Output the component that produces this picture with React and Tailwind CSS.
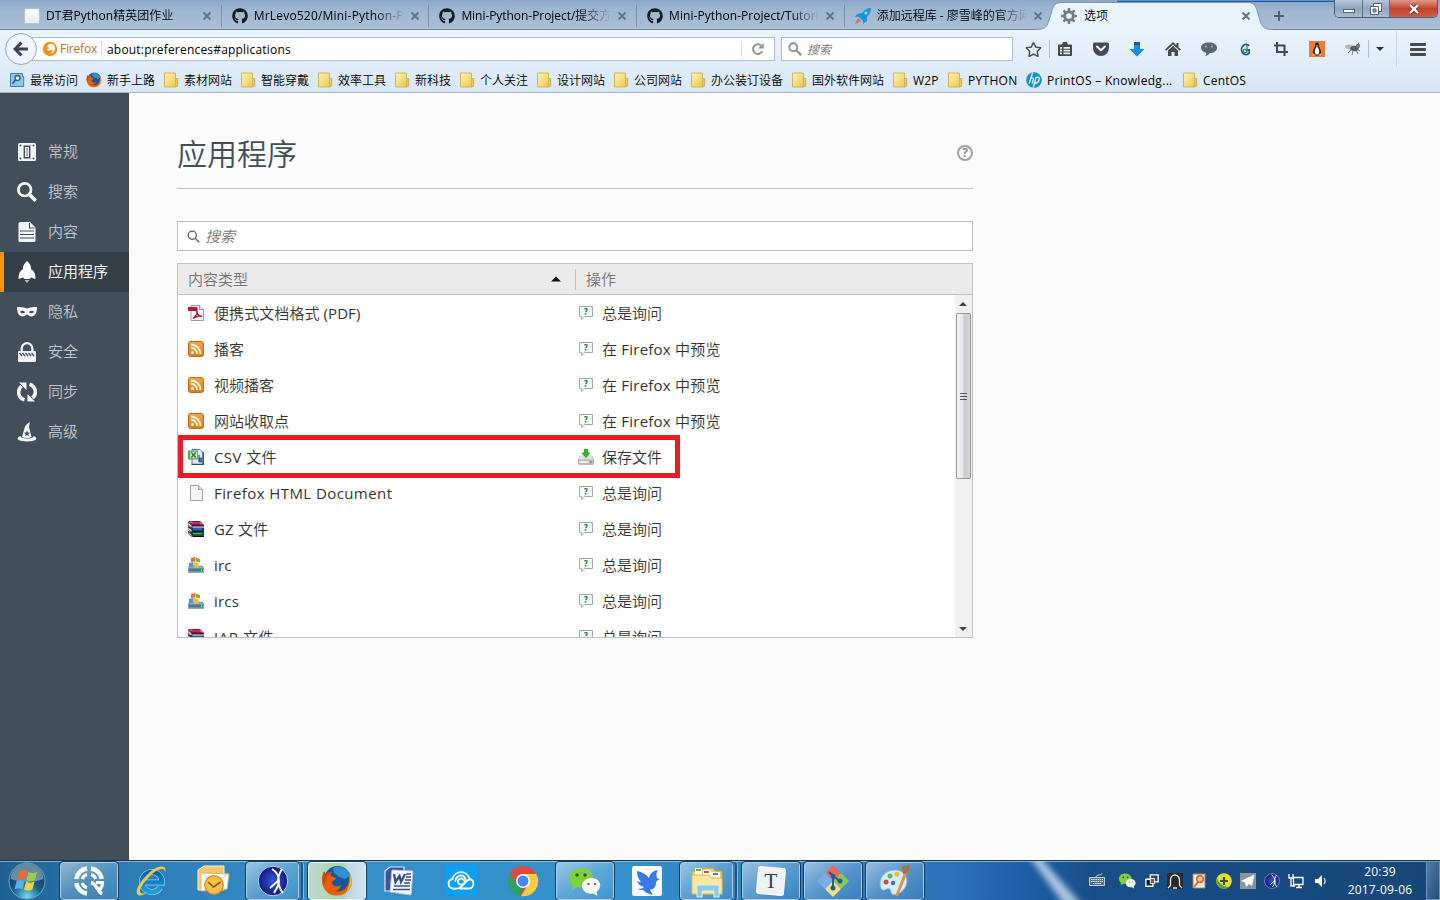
import React from 'react';
import { FaGithub, FaRegStar } from 'react-icons/fa';

const Svg = ({ s = 16, vb = '0 0 16 16', className = '', children }) => (
  <svg width={s} height={s} viewBox={vb} className={'shrink-0 ' + className}>{children}</svg>
);

/* ---------- browser icons ---------- */
const Page = () => (
  <Svg><path d="M1 1h14v14H1z" fill="#fbfbfb" stroke="#dfe3e8" strokeWidth=".6" /><path d="M2 8h12v6H2z" fill="#f0f0f0" /></Svg>
);
const RocketTab = () => (
  <Svg s={18} vb="0 0 18 18">
    <path d="M17 1c-4 0-7 2-9 5L3 7 1 10l4 0 4 4v3l4-3 0-4c3-3 4-6 4-9z" fill="#1b96dc" />
    <circle cx="12" cy="6" r="1.6" fill="#9fd4f2" />
    <path d="M4 11l-3 6 6-3z" fill="#e2574c" opacity=".8" />
  </Svg>
);
const Gear = () => (
  <Svg vb="0 0 16 16" s={16}>
    <path d="M8 0v16M0 8h16M2.400 2.400l11.200 11.200M13.600 2.400L2.400 13.600" stroke="#787c80" strokeWidth="2.500" />
    <circle cx="8" cy="8" r="4.300" fill="#e9f3fc" stroke="#787c80" strokeWidth="2.900" />
  </Svg>
);
const Close = () => (
  <Svg s={10} vb="0 0 10 10"><path d="M1.500 1.500l7 7M8.500 1.500l-7 7" stroke="#66758a" strokeWidth="2.100" /></Svg>
);
const Firefox = ({ s = 16 }) => (
  <Svg s={s} vb="0 0 32 32">
    <circle cx="16.500" cy="14.500" r="13.500" fill="#17559c" />
    <path d="M12 3c6-3 15 0 17 8l-5 3-6-2-5-4z" fill="#2d91cf" />
    <path d="M28 7c4 7 4 14-1 19-6 6-17 6-22 0C0 20 0 12 3 6l2 3c2-2 4-2 6-2-1 1-2 3-1 4l5 2c-1 3-4 2-4 5 1 4 6 4 9 2-1 4-3 5-6 6 8 2 14-4 14-12z" fill="#e66000" />
    <path d="M29 9c3 8 1 15-5 19 6-8 5-13 5-19z" fill="#ffcb2e" />
    <path d="M3 7c-2 5-2 10 0 14l3-9c2-3 4-4 5-5-3-1-5 1-6 2z" fill="#d2430f" />
  </Svg>
);
const FirefoxMono = () => (
  <Svg>
    <circle cx="8" cy="8" r="7.200" fill="#f18f1b" />
    <path d="M7 3c4-1 6 1 6 4 0 4-3 6-6 5 3 0 4-2 3-4-1 2-4 2-5 0l3-1-3-1c0-1 1-2 2-3z" fill="#fff" />
  </Svg>
);
const MostVisited = () => (
  <Svg><path d="M1.500 1.500h12v3h1.200v10H1.500z" fill="#8fc5e6" stroke="#3983b5" /><circle cx="8.500" cy="6" r="2.500" fill="#d8eef9" stroke="#25618c" strokeWidth="1.300" /><path d="M6.500 8l-3 3.500" stroke="#25618c" strokeWidth="1.800" /></Svg>
);
const Folder = () => (
  <Svg>
    <path d="M12 6.500h2.700V14l-2.200 1z" fill="#e9c95a" stroke="#c7a84b" strokeWidth=".9" />
    <path d="M1.500 1h11v14h-11z" fill="url(#folderG)" stroke="#d2b557" strokeWidth="1" />
    <defs><linearGradient id="folderG" x1="0" y1="0" x2="1" y2="1"><stop offset="0" stopColor="#fff4be" /><stop offset="1" stopColor="#eac648" /></linearGradient></defs>
  </Svg>
);
const Hp = () => (
  <Svg>
    <circle cx="8" cy="8" r="7.800" fill="#0b93d3" />
    <path d="M6.500 1L3.200 11.500M4.800 6.500c2-1.200 3 0 2.500 1.500L6 11.500M10.200 5L7.200 15.500M10 5.500c2.500-.8 3.800 0 3.100 2.500-.8 2.500-1.600 3.300-4 3" stroke="#fff" strokeWidth="1.200" fill="none" />
  </Svg>
);

const toolbarIcons = [
  <Svg key="list"><path d="M2 3.500h12a1 1 0 0 1 1 1V14a1 1 0 0 1-1 1H2a1 1 0 0 1-1-1V4.500a1 1 0 0 1 1-1z" fill="#474b4f" /><path d="M6 1h4l1 3H5z" fill="#474b4f" /><path d="M3 6h2v1.700H3zm3.500 0H13v1.700H6.500zM3 8.800h2v1.700H3zm3.500 0H13v1.700H6.500zM3 11.600h2v1.700H3zm3.500 0H13v1.700H6.500z" fill="#eaf3fb" /></Svg>,
  <Svg key="pocket"><path d="M1.500 1.500h13A1.500 1.500 0 0 1 16 3v4a8 8 0 0 1-16 0V3a1.500 1.500 0 0 1 1.500-1.500z" fill="#474b4f" /><path d="M4 5.500l4 3.800 4-3.800" stroke="#eaf3fb" strokeWidth="2" fill="none" strokeLinecap="round" strokeLinejoin="round" /></Svg>,
  <Svg key="down"><path d="M5 1h6v4H5z" fill="#3f5672" /><path d="M5 4h6v4h4.500L8 15.500.500 8H5z" fill="#168cf0" /></Svg>,
  <Svg key="home"><path d="M8 1L0 8.500l1.200 1.200L8 3.500l6.800 6.200L16 8.500l-2.500-2.300V2h-2v2.200z" fill="#474b4f" /><path d="M8 5L3 9.500V15h3.500v-4h3v4H13V9.500z" fill="#474b4f" /></Svg>,
  <Svg key="chat"><path d="M8 1.500c5 0 8 2 8 5.200s-3 5.300-7 5.300c-2 2.300-3.500 3-5 3 1-1 1.500-2 1-3.500C2 11 0 9 0 6.700 0 3.500 3 1.500 8 1.500z" fill="#596675" /><circle cx="5" cy="5.500" r="1" fill="#aeb9c4" /><circle cx="11" cy="5.500" r="1" fill="#aeb9c4" /></Svg>,
  <Svg key="g" s={13}><path d="M12.500 3.500A5.500 6.300 0 1 0 12.500 12.500V8.500H8" fill="none" stroke="#2a45b0" strokeWidth="2" /><path d="M9.800 2v10M9.500 9a2.200 2.200 0 1 0 0 1.500" fill="none" stroke="#2f8c55" strokeWidth="1.500" /></Svg>,
  <Svg key="crop"><path d="M4 1v10h11M1 4.500h10.500V15" fill="none" stroke="#474b4f" strokeWidth="2" /></Svg>,
  <Svg key="tux"><path d="M0 0h16v16H0z" fill="#ee7a35" /><path d="M8 1.500c-2 0-2 2-2 4-1 2-2.500 4-2 7l2 2h4l2-2c.500-3-1-5-2-7 0-2 0-4-2-4z" fill="#222" /><path d="M8 5.500c-2.500 2.500-3 6-1.300 8h2.600C11 11.500 10.500 8 8 5.500z" fill="#fff" /><path d="M6.500 4.500h3L8 6zM3.500 12l3 2-2 1zM12.500 12l-3 2 2 1z" fill="#f6c037" /></Svg>,
  <Svg key="fly"><ellipse cx="5" cy="6" rx="5" ry="2.400" fill="#b3b7bb" transform="rotate(12 4.500 6)" /><ellipse cx="9.500" cy="7.500" rx="4.200" ry="2.800" fill="#55595d" /><circle cx="13" cy="5" r="2.200" fill="#777" /><path d="M6 9l-3 3M8 10l-1 4M11 9l2 4M12 8l3 2M11 5l3-3" stroke="#686c70" strokeWidth=".9" /></Svg>,
];

const tabs = [
  { icon: <Page />, t: 'DT君Python精英团作业', sep: true, k: 'tracking-[0.050px]' },
  { icon: <FaGithub size={16} color="#15181c" />, t: 'MrLevo520/Mini-Python-P', sep: true, k: 'tracking-[0.200px]' },
  { icon: <FaGithub size={16} color="#15181c" />, t: 'Mini-Python-Project/提交方', sep: true, k: 'tracking-[-0.050px]' },
  { icon: <FaGithub size={16} color="#15181c" />, t: 'Mini-Python-Project/Tutori', sep: true, k: 'tracking-[0.050px]' },
  { icon: <RocketTab />, t: '添加远程库 - 廖雪峰的官方网', sep: false, k: '' },
];

const bookmarks = [
  [<MostVisited />, '最常访问', 'w-[77px]'], [<Firefox />, '新手上路', 'w-[77px]'],
  [<Folder />, '素材网站', 'w-[77px]'], [<Folder />, '智能穿戴', 'w-[77px]'],
  [<Folder />, '效率工具', 'w-[77px]'], [<Folder />, '新科技', 'w-[65px]'],
  [<Folder />, '个人关注', 'w-[77px]'], [<Folder />, '设计网站', 'w-[77px]'],
  [<Folder />, '公司网站', 'w-[77px]'], [<Folder />, '办公装订设备', 'w-[101px]'],
  [<Folder />, '国外软件网站', 'w-[101px]'], [<Folder />, 'W2P', 'w-[55px] tracking-[0.200px]'],
  [<Folder />, 'PYTHON', 'w-[79px] tracking-[0.300px]'], [<Hp />, 'PrintOS – Knowledg...', 'w-[156px] tracking-[0.300px]'],
  [<Folder />, 'CentOS', 'w-[80px] tracking-[0.200px]'],
];

/* ---------- preferences sidebar ---------- */
const W = '#f4f5f6';
const nav = [
  ['常规', <Svg key="a" s={20} vb="0 0 20 20"><rect x="1" y="1" width="18" height="18" rx="1.500" fill={W} /><path d="M7.300 4.200h5.400v11.600H7.300z" fill="none" stroke="#424f5a" strokeWidth="1.400" /><path d="M9.300 6h1.400v8H9.300z" fill="#424f5a" opacity=".55" /><g fill="#424f5a"><circle cx="3.500" cy="3.500" r="1" /><circle cx="16.500" cy="3.500" r="1" /><circle cx="3.500" cy="16.500" r="1" /><circle cx="16.500" cy="16.500" r="1" /></g></Svg>],
  ['搜索', <Svg key="b" s={20} vb="0 0 20 20"><circle cx="7.700" cy="7.700" r="6.300" fill="none" stroke={W} strokeWidth="2.700" /><path d="M12 12l6.800 6.800" stroke={W} strokeWidth="3.600" /></Svg>],
  ['内容', <Svg key="c" s={20} vb="0 0 20 20"><path d="M3 0h10l5.500 5.500V18.500a1.500 1.500 0 0 1-1.500 1.500H3a1.500 1.500 0 0 1-1.500-1.500v-17A1.500 1.500 0 0 1 3 0z" fill={W} /><path d="M12.500 1v5h5M3 9h14M3 12.500h14M3 16h14" stroke="#424f5a" strokeWidth="1.200" fill="none" /></Svg>],
  ['应用程序', <Svg key="d" s={22} vb="0 0 22 22"><path d="M11 0c3 2.500 4.200 5 4.200 8.500 2.800 1.500 4.300 4 4.300 9.500l-4.500-1.500-1.500 1.500h-5L7 16.500 2.500 18c0-5.500 1.500-8 4.300-9.500C6.800 5 8 2.500 11 0z" fill="#fff" /><path d="M8.500 19h5L11 22z" fill="#b5bcc1" /></Svg>],
  ['隐私', <Svg key="e" s={20} vb="0 0 20 20"><path d="M0 5c3 0 7 .2 10 1.500C13 5.200 17 5 20 5c0 6-2 9.500-5.500 9.500-2.500 0-3.500-2-4.500-2s-2 2-4.500 2C2 14.500 0 11 0 5z" fill={W} /><path d="M3 9.500c2-1.300 4-1 5.200.8C6.500 11.800 4 11.800 3 9.500zm14 0c-2-1.300-4-1-5.200.8 1.700 1.500 4.200 1.500 5.200-.8z" fill="#424f5a" /></Svg>],
  ['安全', <Svg key="f" s={20} vb="0 0 20 20"><path d="M4.700 9.500V6.500a5.300 5.300 0 0 1 10.600 0v3" fill="none" stroke={W} strokeWidth="2.300" /><rect x="1" y="9" width="18" height="11" rx="1.300" fill={W} /><path d="M2.500 11l2.500 3M5.500 11l2.500 3M8.500 11l2.500 3M11.500 11l2.500 3M14.500 11l2.500 3" stroke="#424f5a" strokeWidth="1.300" /></Svg>],
  ['同步', <Svg key="g" s={20} vb="0 0 20 20"><path d="M7.500 17.800A8 8 0 0 1 4.500 4M12.500 2.200A8 8 0 0 1 15.500 16" fill="none" stroke={W} strokeWidth="3.600" /><path d="M2 .500h7.500v7.500zM18 19.500h-7.500V12z" fill={W} /></Svg>],
  ['高级', <Svg key="h" s={20} vb="0 0 20 20"><path d="M13 0l-1 5 2.500 10c-3 1.500-7 1.500-9.500 0L7.500 6C8.500 3 10 1.500 13 0z" fill={W} /><path d="M10 8.500l.9 2 2.100.200-1.600 1.400.5 2.100-1.900-1.100-1.900 1.100.5-2.100L7 10.700l2.100-.2z" fill="#424f5a" /><path d="M3.500 14c-5 2-4 5.500 6.500 5.500s11.500-3.500 6.500-5.500c.5 3-13 3.500-13 0z" fill={W} /></Svg>],
];

/* ---------- file type icons ---------- */
const Pdf = () => <Svg><path d="M3 .500h8.500l4 4v11H3z" fill="#fff" stroke="#a8909a" /><path d="M11.500.500v4h4" fill="#eee" stroke="#a8909a" /><path d="M0 2h9.500v4H0z" fill="#ad1f2e" /><path d="M5 13.500c2-1 4.500-5 4-7-.3-1-.9 0 0 1.500 1 2 2.500 3.500 5 3.500-3-1.200-6 0-9 2z" fill="none" stroke="#ad1f2e" strokeWidth="1.400" /></Svg>;
const Rss = () => <Svg><rect x=".5" y=".5" width="15" height="15" rx="2" fill="url(#rssG)" stroke="#c56a16" /><defs><linearGradient id="rssG" x1="0" y1="0" x2="0" y2="1"><stop offset="0" stopColor="#f2a54e" /><stop offset="1" stopColor="#e07a14" /></linearGradient></defs><circle cx="4.500" cy="11.600" r="1.500" fill="#fff" /><path d="M3 6.800a6.200 6.200 0 0 1 6.200 6.200M3 3.500a9.500 9.500 0 0 1 9.500 9.500" fill="none" stroke="#fff3e2" strokeWidth="1.900" /></Svg>;
const Csv = () => <Svg><path d="M4 .500h8l3.500 3.500v11.500H4z" fill="#dfe9f7" stroke="#5577a5" /><path d="M15 3v12.500H3.500" fill="none" stroke="#274a80" strokeWidth="1.300" /><path d="M0 1.500h10v9H0z" fill="#54a455" /><path d="M2.200 2.800h7v6.500h-7z" fill="#d9efd4" /><path d="M3.300 3.500l4.500 5M7.800 3.500l-4.500 5" stroke="#287d38" strokeWidth="1.600" /><path d="M11 6v7M13.300 9h-1.300v4h1.300z" stroke="#254f90" strokeWidth="1.100" fill="none" /></Svg>;
const Html = () => <Svg><path d="M2.500.500h8l4 4v11h-12z" fill="#f6f6f6" stroke="#a4a4a4" /><path d="M10.500.500v4h4" fill="#ddd" stroke="#a4a4a4" /></Svg>;
const Rar = () => <Svg><path d="M0 0h12l4 4v1H4z" fill="#8d1246" /><path d="M2 1h10l2 2H4z" fill="#b8266a" /><path d="M3 4.500h13v1H4z" fill="#111" /><path d="M0 1l4 4v2L0 4z" fill="#eee" stroke="#111" strokeWidth=".6" /><path d="M0 5l4 1.500h12V10H4L0 7z" fill="#153b88" /><path d="M5 7.500h9v1H5z" fill="#4c90d6" /><path d="M0 10l4 1h12v4.500H5L0 12z" fill="#14522c" /><path d="M5 12h9v1.200H5z" fill="#46b56c" /><path d="M0 6l4 3v2L0 8.500zM0 10.500L4 14v1.500L0 12.500z" fill="#eee" stroke="#111" strokeWidth=".6" /><path d="M4 10h12v1H4zM4 15h12v1H5z" fill="#111" /><path d="M12 1.500l2 2M2.500 1.200h2" stroke="#efc43c" strokeWidth="1" /></Svg>;
const Win = () => <Svg><path d="M1.500 9h13L16 11v4.500H0V11z" fill="#9aaab3" stroke="#72828c" strokeWidth=".6" /><path d="M1 11.500h14v3H1z" fill="#47788c" /><path d="M13 12h1v2h-1z" fill="#7bee81" /><path d="M3 1l4-1v4.500l-4 .5z" fill="#e3703a" /><path d="M7.500.500L12 2v3.500L7.500 4.500z" fill="#7fb43f" /><path d="M1 6l4.500-1v5H1z" fill="#4a98da" /><path d="M6 5l4.500 1v4.500H6z" fill="#f1bd35" /></Svg>;
const Ask = () => <Svg><path d="M1.500 1.500h13v10H7L3.500 14.500v-3h-2z" fill="#f5f8f9" stroke="#a3a9ab" /><path d="M6.300 3.800h2.500v1.900L7.600 7M7.600 8v1.500" fill="none" stroke="#2f9c3a" strokeWidth="1.600" /></Svg>;
const Save = () => <Svg><path d="M2 7h12l2 4v3.500l-1 1H1l-1-1V11z" fill="#b8b8b8" stroke="#999" strokeWidth=".5" /><path d="M2 7h12l1.500 3.500H.5z" fill="#dedede" /><path d="M1.500 12h9v2h-9z" fill="#eee" /><path d="M12 12.500h2v1h-2z" fill="#666" /><path d="M6.300 0h3.400v4H12L8 8.500 4 4h2.300z" fill="#37b52d" stroke="#1d861a" strokeWidth=".7" /></Svg>;

const L = 'tracking-[0.420px]';
const rows = [
  [<Pdf />, '便携式文档格式 (PDF)', '总是询问', 'tracking-[0.080px]', ''],
  [<Rss />, '播客', '在 Firefox 中预览', '', 'tracking-[0.220px]'],
  [<Rss />, '视频播客', '在 Firefox 中预览', '', 'tracking-[0.220px]'],
  [<Rss />, '网站收取点', '在 Firefox 中预览', '', 'tracking-[0.220px]'],
  [<Csv />, 'CSV 文件', '保存文件', L, ''],
  [<Html />, 'Firefox HTML Document', '总是询问', L, ''],
  [<Rar />, 'GZ 文件', '总是询问', 'tracking-[0.200px]', ''],
  [<Win />, 'irc', '总是询问', 'tracking-[0.200px]', ''],
  [<Win />, 'ircs', '总是询问', 'tracking-[0.200px]', ''],
  [<Rar />, 'JAR 文件', '总是询问', 'tracking-[0.600px]', ''],
];

/* ---------- taskbar icons ---------- */
const big = '0 0 32 32';
const Orb = () => (
  <Svg s={40} vb="0 0 40 40">
    <defs><radialGradient id="orb" cx=".5" cy=".95" r=".8"><stop offset="0" stopColor="#6fe0f6" /><stop offset=".5" stopColor="#1a5d8b" /><stop offset="1" stopColor="#173c5b" /></radialGradient></defs>
    <circle cx="20" cy="20" r="18" fill="url(#orb)" stroke="#6ea4c8" strokeWidth="1" />
    <path d="M3.500 18a16.500 15.500 0 0 1 33 0c-10 4-22 4-33 0z" fill="#b9d3e3" opacity=".5" />
    <path d="M12 11c3-2 5-2 8-.5l-2 8.500c-3-1.500-5-1.500-8 0z" fill="#ee6a35" />
    <path d="M21.500 11c3 1.500 5 1.500 8.500 0l-2 8c-3 1.500-5.500 1.500-8.500 0z" fill="#9bcf4b" />
    <path d="M9.500 20.500c3-1.500 5-1.500 8 0l-2 8c-3-1.500-5-1.500-8 0z" fill="#52b2ec" />
    <path d="M19 20.500c3 1.500 5.500 1.500 8.500 0l-2 8c-3 1.500-5.500 1.500-8.500 0z" fill="#fbd03f" />
  </Svg>
);
const Radar = () => (
  <Svg s={32} vb={big}>
    <g fill="none" stroke="#fff">
      <path d="M14 3.500A12.500 12.500 0 0 0 3.300 14M18 3.500A12.500 12.500 0 0 1 28.700 14M3.300 18A12.500 12.500 0 0 0 14 28.500" strokeWidth="4.500" />
      <path d="M14 9.500A6.700 6.700 0 0 0 9.300 14M18 9.500A6.700 6.700 0 0 1 22.700 14M9.300 18A6.700 6.700 0 0 0 14 22.600" strokeWidth="3.200" />
      <path d="M18 17.500c6 1 6 9 11 11.500" strokeWidth="3.600" />
      <path d="M23 17.500h6.500c0 3-1 5.500-3 7.500" strokeWidth="3.200" />
    </g>
  </Svg>
);
const IE = () => (
  <Svg s={34} vb="0 0 34 34">
    <defs><linearGradient id="ieG" x1="0" y1="0" x2="0" y2="1"><stop offset="0" stopColor="#0d5fae" /><stop offset="1" stopColor="#1ba0dd" /></linearGradient></defs>
    <path d="M26 23.500c-1.600 3-4.800 4.500-8 4.500a10 10 0 1 1 10-9.500H10" fill="none" stroke="#8fd3f5" strokeWidth="6" />
    <path d="M26 23.500c-1.600 3-4.800 4.500-8 4.500a10 10 0 1 1 10-9.500H10" fill="none" stroke="url(#ieG)" strokeWidth="4.700" />
    <path d="M31 9c3-8-6-9-16 0C5 18 0 28 4 31c3 1.500 7-1 9-3-4 2-7 2-7-1C6 23 12 16 18 10c7-6 14-7 13-1z" fill="#f6c63d" />
  </Svg>
);
const Outlook = () => <Svg s={34} vb="0 0 34 34"><path d="M2 6l6-4h20v24H2z" fill="#f6c56a" stroke="#fff0c6" /><path d="M5 9l28 1-2 15-26 2z" fill="#fff" stroke="#d9ba78" /><path d="M5 9l13 9 15-8" fill="none" stroke="#ccc" /><circle cx="18" cy="21" r="9.300" fill="#f8c04a" stroke="#d58b20" strokeWidth="1.300" /><path d="M12 18l5.500 5 7-5" fill="none" stroke="#8a560d" strokeWidth="1.600" /></Svg>;
const Sphere = ({ s = 32 }) => <Svg s={s} vb={big}><defs><radialGradient id="sph"><stop offset="0" stopColor="#3558d0" /><stop offset="1" stopColor="#101b83" /></radialGradient></defs><circle cx="16" cy="16" r="14.800" fill="url(#sph)" stroke="#c5d2f3" strokeWidth="1" /><path d="M15 4c5 3 7 8 7 13-1 5-3 8-5 11M25 4c-3 5-4 9-4 12 1 5 2 9 5 12M22 15l-9 8" fill="none" stroke="#fff" strokeWidth="1.900" /></Svg>;
const Word = () => <Svg s={32} vb={big}><path d="M2 6l5-4h14v24H2z" fill="#39539d" stroke="#dfe7f5" strokeWidth="1.200" /><path d="M9 5l21 1-2 24-21-3z" fill="#fafcff" stroke="#b7c5dd" /><path d="M11 9l1.500 8 4-6 1.500 6L22 9" stroke="#314f97" strokeWidth="2.300" fill="none" /><path d="M23 9h5M23 12h5M22 15h6M21 18h6M11 21h16M10 24.500h17" stroke="#314f97" strokeWidth="1.500" /></Svg>;
const Cloud = () => <Svg s={32} vb={big}><rect width="32" height="32" rx="2" fill="#0c9ff3" /><path d="M8 23.500a4.800 4.800 0 0 1-.5-9.500M7.500 14a8.700 8.700 0 0 1 17 0 4.800 4.800 0 0 1-.5 9.500H15M8 23.500c5 1 8-1 10-3.500M18.500 15a3 3 0 1 0-2 4.500c4-1 5-5 3-7.500-3-3-9-1-9 4M24 15c-3 0-4 3-6 5" fill="none" stroke="#fff" strokeWidth="1.800" strokeLinecap="round" /></Svg>;
const Chrome = () => <Svg s={32} vb={big}><circle cx="16" cy="16" r="15" fill="#dd4b3e" /><path d="M3 8.500l6.500 11L16 23l-3 7.700A15 15 0 0 1 3 8.500z" fill="#23a566" /><path d="M16 9h13.300A15 15 0 0 1 14 31l7-11.500z" fill="#ffcd40" /><circle cx="16" cy="16" r="7" fill="#fff" /><circle cx="16" cy="16" r="5.500" fill="#4587f4" /></Svg>;
const WeChat = ({ s = 32 }) => <Svg s={s} vb={big}><path d="M12 3C5 3 0 7 0 13c0 3 1.500 5.500 4 7.500L3 25l5-3c9 2 16-2 16-9C24 7 18 3 12 3z" fill="#7fd13b" /><path d="M22.500 13C16.500 13 13 17 13 21c0 5 5 8.500 11 7.500l4.500 2.500-1-4c7-5 3.500-14-5-14z" fill="#f6f8f6" /><g fill="#235b1b"><circle cx="8" cy="10" r="1.700" /><circle cx="16" cy="10" r="1.700" /><circle cx="19.500" cy="19" r="1.300" fill="#777" /><circle cx="26" cy="19" r="1.300" fill="#777" /></g></Svg>;
const Bird = () => <Svg s={32} vb={big}><rect x="1" y="1" width="30" height="30" rx="2.500" fill="#fbfcff" /><path d="M6 6c5 1 9 3 12 7 1-4 3-7 9-8-2 3-2 5-1 8l3 2c-3 0-4 1-4 4-1 4-3 5-6 6l3 5c-5-1-8-3-10-5-2 0-4 0-5-1 3 0 5-1 6-2-4-1-6-3-7-6 2 1 3 1 4 1-3-3-4-7-4-11z" fill="#3879e5" /></Svg>;
const Explorer = () => <Svg s={34} vb="0 0 34 34"><path d="M2 7h9l2-3h10l2 3h7v23H2z" fill="#efcc6c" stroke="#c7a049" /><path d="M5 4h7v8H5z" fill="#fff8de" /><path d="M6 5h5v2H6z" fill="#5cb446" /><path d="M13 6h8v7h-8z" fill="#fff" /><path d="M14 7h5v2h-5z" fill="#cc5252" /><path d="M21 8h9v8h-9z" fill="#fff8de" /><path d="M23 9h5v2h-5z" fill="#3a8cd2" /><path d="M2 11h17l2 3h11v16H2z" fill="#fae79e" stroke="#dbb85d" /><path d="M7 21h22v12h-5v-6H12v6H7z" fill="#8bcbe4" stroke="#d3f2fb" /></Svg>;
const Typora = () => <div className="relative flex h-[28px] w-[28px] items-center justify-center"><div className="absolute inset-0 rotate-[5deg] rounded-[3px] bg-white" /><div className="relative flex h-[26px] w-[26px] items-center justify-center bg-[#f0f1f2] font-['Liberation_Serif',serif] text-[21px] leading-none text-[#3d3d3d]">T</div></div>;
const Git = () => <Svg s={34} vb="0 0 34 34"><path d="M17 1l8 8-8 8-8-8z" fill="#ee655c" /><path d="M25 9l8 8-8 8-8-8z" fill="#8cc653" /><path d="M9 9l8 8-8 8-8-8z" fill="#7aaeea" /><path d="M17 17l8 8-8 8-8-8z" fill="#f7df79" /><path d="M13 8l4 4v12M17 12l7 5" stroke="#285e86" strokeWidth="2" fill="none" /><g fill="#285e86"><circle cx="17" cy="12" r="2.300" /><circle cx="24" cy="17" r="2.500" /><circle cx="17" cy="24" r="2.500" /></g></Svg>;
const Paint = () => <Svg s={34} vb="0 0 34 34"><path d="M17 6C8 6 2 12 2 20c0 7 4 7 7 5 3-1 4 1 4 4 2 4 10 1 14-5 5-9 0-18-10-18z" fill="#d5edf8" stroke="#7db5d4" /><circle cx="8" cy="18" r="2.500" fill="#d44d40" /><circle cx="12" cy="12" r="2.500" fill="#67b64f" /><circle cx="19" cy="10" r="2.600" fill="#f2bc34" /><circle cx="15" cy="19" r="2.200" fill="#3a7ab5" /><path d="M26 9l3 1-9 22c-2 1-3 0-2-2z" fill="#e39143" /><path d="M24 2l8-1-2 8-5 1z" fill="#a9713d" /></Svg>;

const tasks = [
  [<Radar />, 'on'], [<IE />, ''], [<Outlook />, ''], [<Sphere />, 'stack'], [<Firefox s={32} />, 'active'],
  [<Word />, ''], [<Cloud />, ''], [<Chrome />, ''], [<WeChat />, 'on'], [<Bird />, ''],
  [<Explorer />, 'stack'], [<Typora />, 'on'], [<Git />, 'on'], [<Paint />, 'on'],
];
const taskLook = {
  '': '',
  on: 'border border-[#a9cbe6] bg-gradient-to-br from-white/50 via-white/20 to-white/5 outline outline-1 outline-[#173d60]',
  active: 'border border-[#e2f2f6] bg-[linear-gradient(90deg,#bfd9d2,#a4d8a0_62%,#bcd5e5_66%,#cfe2ef)] outline outline-1 outline-[#173d60]',
  stack: 'border border-[#a9cbe6] bg-gradient-to-br from-white/50 via-white/20 to-white/5 outline outline-1 outline-[#173d60]',
};

const trayIcons = [
  ['w-[32px]', <Svg key="k" className="-mt-[4px]"><path d="M.500 6.500h15v8H.5z" fill="#58728c" stroke="#c3ccd4" /><path d="M2 8.500h12M2 10.500h12M4 12.500h8" stroke="#e3e8ec" strokeWidth="1" strokeDasharray="1.500 .7" /><path d="M7 6c0-3 6-1 6-4" stroke="#c3ccd4" fill="none" /></Svg>],
  ['w-[28px]', <WeChat key="w" s={17} />],
  ['w-[21px]', <Svg key="s" s={14}><path d="M6 1h9v8H6z" fill="#2e4052" stroke="#fff" strokeWidth="1.500" /><path d="M1 6h8v8H1z" fill="#111c28" stroke="#fff" strokeWidth="1.500" /><path d="M6 5h5v6H6z" fill="#667" stroke="#fff" /></Svg>],
  ['w-[26px]', <Svg key="h"><path d="M0 0h16v16H0z" fill="#2b2b2b" /><path d="M3.500 12V7a4.500 5 0 0 1 9 0v5M1 15l3-3M15 15l-3-3M6 15h4" stroke="#e6e6e6" strokeWidth="1.300" fill="none" /></Svg>],
  ['w-[22px]', <Svg key="d"><path d="M2 1h12v14H2z" fill="#f7eee0" stroke="#9d8061" /><circle cx="9" cy="6" r="3.300" fill="#f4c9a2" stroke="#d96a1f" strokeWidth="1.800" /><path d="M7 9l-4 5" stroke="#d96a1f" strokeWidth="2" /></Svg>],
  ['w-[27px]', <Svg key="p"><circle cx="8" cy="8" r="7.800" fill="#edda2f" /><path d="M1 5a7.800 7.800 0 0 0 12 9C8 14 3 11 1 5z" fill="#4ea739" /><path d="M8 4v8M4 8h8" stroke="#26601a" strokeWidth="2.200" /></Svg>],
  ['w-[22px]', <Svg key="a"><path d="M0 0h16v16H0z" fill="#8d9499" /><path d="M14.500 1.500L1 8l4 1.500L6 14l3-3 3 2z" fill="#fff" /></Svg>],
  ['w-[25px]', <Sphere key="b" s={16} />],
  ['w-[24px]', <Svg key="n"><path d="M5.500 4.500h9.500v7H5.500zM8 14.500h6M11 11.500v3M1 1v4h4V1M3 5v8h4" fill="none" stroke="#fff" strokeWidth="1.300" /></Svg>],
  ['w-[25px]', <Svg key="v"><path d="M2 6h3l4-4v12l-4-4H2z" fill="#fff" /><path d="M11 5c1.500 2 1.500 4 0 6" fill="none" stroke="#dfe8f1" strokeWidth="1.200" /></Svg>],
];

const VLine = ({ c = 'bg-[#b3c2d3]' }) => <div className={'h-[18px] w-px shrink-0 ' + c} />;

export default function App() {
  return (
    <div className="flex h-[900px] w-[1440px] flex-col overflow-hidden bg-[#fbfbfb] font-['Open_Sans','Noto_Sans_CJK_SC_DemiLight','Noto_Sans_CJK_SC',sans-serif] text-[12px] text-black">
      {/* tab strip */}
      <div className="relative flex h-[30px] shrink-0 border-b border-[#7088a4] bg-[linear-gradient(180deg,#8da6c8_0%,#9fb6d1_35%,#abbfd6_100%)] pl-[14px]">
        {tabs.map((t, i) => (
          <div key={i} className="flex h-[30px] w-[207.700px] shrink-0 items-center pl-[9px] pt-[2px]">
            <div className="flex w-[18px] shrink-0 justify-center">{t.icon}</div>
            <div className={'ml-[5px] w-[151px] shrink-0 overflow-hidden whitespace-nowrap [mask-image:linear-gradient(90deg,#000_80%,transparent_100%)] ' + t.k}>{t.t}</div>
            <div className="ml-[5px] flex w-[10px]"><Close /></div>
            <div className="flex-1" />
            {t.sep && <div className="h-[22px] w-px bg-[#7d91aa]" />}
          </div>
        ))}
        <div className="absolute left-[1036px] top-0 h-[30px] w-[240px]">
          <svg width="240" height="30" viewBox="0 0 240 30" className="absolute inset-0">
            <path d="M0 30v-.5c8 0 11-2 13-9l3-10c2-6 4-8 10-8h185c6 0 8 2 10 8l3 10c2 7 5 9 13 9v.5z" fill="#e9f3fc" />
            <path d="M0 29.500c8 0 11-2 13-9l3-10c2-6 4-8 10-8h185c6 0 8 2 10 8l3 10c2 7 5 9 13 9" fill="none" stroke="#7f97b3" />
          </svg>
          <div className="relative flex h-[30px] items-center pl-[25px] pt-[2px]">
            <Gear />
            <span className="ml-[7px] w-[157px]">选项</span>
            <Close />
          </div>
        </div>
        <div className="absolute left-[1273px] top-[10px]"><Svg s={12} vb="0 0 12 12"><path d="M6 1v10M1 6h10" stroke="#4e5c6c" strokeWidth="1.800" /></Svg></div>
        <div className="absolute left-[1117px] top-0 h-[2px] w-[225px] border-b border-[#2f5a98] bg-[#5c92d3]" />
        <div className="absolute left-[1334px] top-0 flex h-[18px] w-[104px] overflow-hidden rounded-b-[5px] border border-t-0 border-[#4b5e76]">
          <div className="flex w-[28px] items-end justify-center border-r border-[#5d7087] bg-gradient-to-b from-[#b7c8db] via-[#8fa6c0] to-[#aabdd2] pb-[4px]"><div className="h-[4px] w-[12px] border border-[#53657c] bg-white" /></div>
          <div className="flex w-[27px] items-center justify-center border-r border-[#5d7087] bg-gradient-to-b from-[#b7c8db] via-[#8fa6c0] to-[#aabdd2]">
            <Svg s={12} vb="0 0 12 12"><path d="M3.500.500h8v8h-8z" fill="#fff" stroke="#4f627a" /><path d="M.500 3.500h8v8h-8z" fill="#fff" stroke="#4f627a" /><path d="M3 6h3v3H3z" fill="#8fa6c0" stroke="#4f627a" /></Svg>
          </div>
          <div className="flex flex-1 items-center justify-center bg-gradient-to-b from-[#de9a8a] via-[#c2412a] to-[#d0604a]">
            <Svg s={12} vb="0 0 12 12"><path d="M2 2l8 8M10 2l-8 8" stroke="#6b3a38" strokeWidth="4" /><path d="M2 2l8 8M10 2l-8 8" stroke="#fff" strokeWidth="2.400" /></Svg>
          </div>
        </div>
      </div>

      {/* navigation and bookmarks */}
      <div className="flex h-[63px] shrink-0 flex-col border-b border-[#a6b6c9] bg-[linear-gradient(180deg,#e9f3fc,#d9e7f6)]">
        <div className="flex h-[38px] items-center pl-[5px]">
          <div className="z-10 flex h-[32px] w-[32px] shrink-0 items-center justify-center rounded-full border border-[#94a8c0] bg-[#eef5fc]">
            <Svg s={16}><path d="M8.500 1.500L2 8l6.500 6.500M2.500 8H15" fill="none" stroke="#3f4347" strokeWidth="3" /></Svg>
          </div>
          <div className="-ml-[5px] flex h-[24px] w-[743px] shrink-0 items-center border border-[#a9bcd3] bg-white pl-[9px]">
            <FirefoxMono />
            <span className="ml-[2px] w-[40px] whitespace-nowrap tracking-[-0.200px] text-[#c06a2c]">Firefox</span>
            <div className="ml-px h-[16px] w-px bg-[#d6dbe0]" />
            <span className="ml-[5px] flex-1 pt-px tracking-[0.190px]">about:preferences#applications</span>
            <div className="h-[16px] w-px bg-[#d6dbe0]" />
            <div className="flex w-[32px] justify-center"><Svg s={14}><path d="M12.800 10.500A5.500 5.500 0 1 1 11.500 4" fill="none" stroke="#8e9499" strokeWidth="2.200" /><path d="M14.500 1v6.500H8z" fill="#8e9499" /></Svg></div>
          </div>
          <div className="ml-[6px] flex h-[24px] w-[232px] shrink-0 items-center border border-[#a9bcd3] bg-white pl-[6px]">
            <Svg s={14}><circle cx="6" cy="6" r="4.500" fill="none" stroke="#8f9499" strokeWidth="2.200" /><path d="M9.500 9.500l5.500 5.500" stroke="#8f9499" strokeWidth="2.600" /></Svg>
            <span className="ml-[5px] pt-px italic text-[#6f6f6f]">搜索</span>
          </div>
          <div className="ml-[11px] flex w-[18px] justify-center"><FaRegStar size={17} color="#474b4f" /></div>
          <div className="ml-[7px]"><VLine /></div>
          <div className="-ml-[3px] flex">
            {toolbarIcons.map((ic, i) => <div key={i} className="flex w-[36px] items-center justify-center">{ic}</div>)}
          </div>
          <div className="-ml-[3px]"><VLine /></div>
          <div className="ml-[7px]"><Svg s={8} vb="0 0 8 8"><path d="M0 2h8L4 6z" fill="#2c3034" /></Svg></div>
          <div className="ml-[12px] h-[36px] w-px bg-[#c8d6e6]" />
          <div className="ml-[13px] flex w-[16px] flex-col gap-[2px]">
            <div className="h-[3px] rounded-[1px] bg-[#474b4f]" /><div className="h-[3px] rounded-[1px] bg-[#474b4f]" /><div className="h-[3px] rounded-[1px] bg-[#474b4f]" />
          </div>
        </div>
        <div className="flex h-[24px] items-center pl-[9px]">
          {bookmarks.map(([ic, t, w], i) => (
            <div key={i} className={'flex shrink-0 items-center gap-[5px] whitespace-nowrap ' + w}>{ic}<span className="pt-[2px]">{t}</span></div>
          ))}
        </div>
      </div>

      {/* page */}
      <div className="flex min-h-0 flex-1">
        <div className="w-[129px] shrink-0 bg-[#424f5a] pt-[39px] text-[15px]">
          {nav.map(([t, ic], i) => (
            <div key={t} className={i === 3 ? 'flex h-[40px] items-center border-l-4 border-[#ff9500] bg-[#343f48] pb-px pl-[11px] text-white' : 'flex h-[40px] items-center pb-px pl-[15px] text-[#c1c6ca]'}>
              <div className="flex w-[24px] justify-center">{ic}</div>
              <span className="ml-[9px] pb-px font-light">{t}</span>
            </div>
          ))}
        </div>
        <div className="flex w-[844px] shrink-0 flex-col pl-[48px]">
          <div className="flex h-[96px] items-center justify-between border-b border-[#c1c1c1] pt-[27px]">
            <h1 className="text-[30px] leading-none text-[#424f5a]">应用程序</h1>
            <div className="mb-[3px] flex h-[16px] w-[16px] items-center justify-center rounded-full border-2 border-[#a0a0a0] text-[12px] font-bold leading-none text-[#909090]">?</div>
          </div>
          <div className="mt-[32px] flex h-[30px] shrink-0 items-center border border-[#c1c1c1] bg-white pl-[9px]">
            <Svg s={13}><circle cx="6.500" cy="6.500" r="5" fill="none" stroke="#555" strokeWidth="1.500" /><path d="M10 10l5 5" stroke="#555" strokeWidth="1.700" /></Svg>
            <span className="ml-[5px] text-[15px] font-light italic text-[#777]">搜索</span>
          </div>
          <div className="relative mt-[12px] flex h-[375px] shrink-0 flex-col border border-[#c1c1c1] bg-white text-[15px] text-[#333]">
            <div className="flex h-[31px] shrink-0 items-center border-b border-[#c1c1c1] bg-[#ebebeb] pl-[10px] text-[#737373]">
              <span className="w-[363px]">内容类型</span>
              <Svg s={10} vb="0 0 10 10"><path d="M0 7.500L5 2.500l5 5z" fill="#111" /></Svg>
              <div className="ml-[14px] h-[21px] w-px bg-[#c1c1c1]" />
              <span className="ml-[10px]">操作</span>
            </div>
            <div className="flex min-h-0 flex-1">
              <div className="flex-1 overflow-hidden">
                {rows.map(([ic, name, act, k1, k2], i) => (
                  <div key={i} className="flex h-[36px] items-center whitespace-nowrap pl-[10px]">
                    {ic}
                    <span className={'ml-[10px] w-[364px] ' + k1}>{name}</span>
                    {i === 4 ? <Save /> : <Ask />}
                    <span className={'ml-[8px] ' + k2}>{act}</span>
                  </div>
                ))}
              </div>
              <div className="flex w-[17px] flex-col items-center bg-[#f0f0f0] pr-px">
                <div className="flex h-[18px] items-center"><Svg s={8} vb="0 0 8 8"><path d="M0 6l4-4 4 4z" fill="#444" /></Svg></div>
                <div className="flex h-[166px] w-[15px] flex-col items-center justify-center gap-[2px] rounded-[2px] border border-[#989898] bg-[linear-gradient(90deg,#f5f5f5,#e4e4e6_45%,#c8c9cd_55%,#d6d7da)]">
                  <div className="h-px w-[7px] bg-[#555]" /><div className="h-px w-[7px] bg-[#555]" /><div className="h-px w-[7px] bg-[#555]" />
                </div>
                <div className="flex-1" />
                <div className="flex h-[16px] items-center"><Svg s={8} vb="0 0 8 8"><path d="M0 2h8L4 6z" fill="#444" /></Svg></div>
              </div>
            </div>
            <div className="absolute left-0 top-[171px] h-[43px] w-[502px] border-[5px] border-[#e81c24]" />
          </div>
        </div>
      </div>

      {/* taskbar */}
      <div className="relative flex h-[40px] shrink-0 border-t border-[#173956] bg-[linear-gradient(90deg,#1c608f_0%,#2c7bb5_8%,#348cc5_20%,#3592cc_42%,#2e7fc2_55%,#2b73b8_66%,#1f5fa5_71%,#184e88_76%,#164778_100%)] shadow-[inset_0_1px_0_rgba(190,220,240,0.6)]">
        <svg width="110" height="39" viewBox="0 0 110 39" className="absolute left-[1000px] top-0">
          <defs><filter id="soft" x="-50%" y="-50%" width="200%" height="200%"><feGaussianBlur stdDeviation="3" /></filter></defs>
          <path d="M28-6h10l46 52H66z" fill="#cfe2f5" opacity=".8" filter="url(#soft)" />
        </svg>
        <div className="flex w-[58px] shrink-0 items-center pl-[7px]"><Orb /></div>
        {tasks.map(([ic, st], i) => (
          <div key={i} className="flex w-[62px] shrink-0 justify-center pt-px">
            <div className={'flex h-[38px] items-center justify-center rounded-[3px] ' + (st === 'stack' ? 'w-[53px] ' : 'w-[58px] ') + taskLook[st]}>{ic}</div>
            {st === 'stack' && <div className="h-[38px] w-[5px] rounded-r-[3px] border-r border-[#8fb9db] bg-[#3c80b5] shadow-[inset_-2px_0_0_#21557f]" />}
          </div>
        ))}
        <div className="flex-1" />
        <div className="flex w-[252px] shrink-0 items-center">
          <div className="-ml-px" />
          {trayIcons.map(([w, ic], i) => <div key={i} className={'flex shrink-0 items-center justify-center ' + w}>{ic}</div>)}
        </div>
        <div className="flex w-[92px] shrink-0 flex-col items-center justify-center pt-px leading-[18px] tracking-[0.200px] text-white"><span>20:39</span><span>2017-09-06</span></div>
        <div className="h-full w-[14px] border border-[#7295b7] bg-gradient-to-br from-[#527ca6] to-[#244f7b]" />
      </div>
    </div>
  );
}
